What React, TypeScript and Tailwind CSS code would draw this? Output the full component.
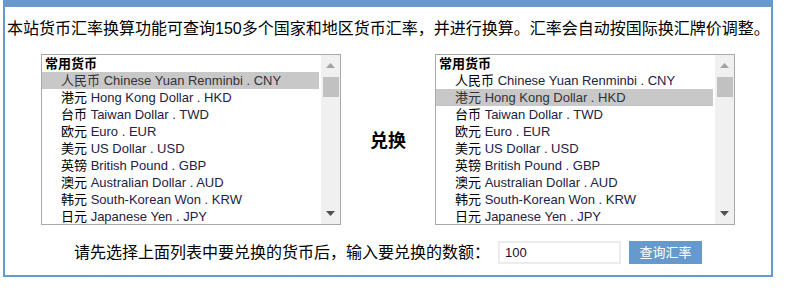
const currencies = [
  { cn: "人民币", en: "Chinese Yuan Renminbi . CNY" },
  { cn: "港元", en: "Hong Kong Dollar . HKD" },
  { cn: "台币", en: "Taiwan Dollar . TWD" },
  { cn: "欧元", en: "Euro . EUR" },
  { cn: "美元", en: "US Dollar . USD" },
  { cn: "英镑", en: "British Pound . GBP" },
  { cn: "澳元", en: "Australian Dollar . AUD" },
  { cn: "韩元", en: "South-Korean Won . KRW" },
  { cn: "日元", en: "Japanese Yen . JPY" },
];

type currencyListProps = {
  selected: number;
};

const CurrencyList = ({ selected }: currencyListProps) => {
  return (
    <div className="w-[300px] h-[171px] border border-[#a9a9a9] flex overflow-hidden bg-white">
      {/* options */}
      <div className="flex-1 pr-[2px] overflow-hidden">
        <div className="h-[17px] leading-[17px] pl-[3px] font-bold text-black text-[13px]">常用货币</div>
        {currencies.map((c, i) => (
          <div
            key={c.en}
            className={
              i === selected
                ? "h-[17px] leading-[17px] pl-[19px] text-[13px] whitespace-nowrap bg-[#c8c8c8] text-[#333333]"
                : "h-[17px] leading-[17px] pl-[19px] text-[13px] whitespace-nowrap text-black"
            }
          >
            {c.cn}{" "}
            <span className={i === selected ? "text-[#333333]" : "text-[#222244]"}>{c.en}</span>
          </div>
        ))}
      </div>
      {/* scrollbar */}
      <div className="w-[19px] h-full bg-[#f0f0f0] flex flex-col items-center">
        <div className="h-[17px] w-full flex items-center justify-center pt-[4px]">
          <svg width="9" height="5" viewBox="0 0 9 5">
            <path d="M4.5 0 L9 5 L0 5 Z" fill="#a3a3a3" />
          </svg>
        </div>
        <div className="mt-[5px] w-[16px] h-[20px] bg-[#c1c1c1]" />
        <div className="flex-1" />
        <div className="h-[17px] w-full flex items-center justify-center pb-[4px]">
          <svg width="9" height="5" viewBox="0 0 9 5">
            <path d="M0 0 L9 0 L4.5 5 Z" fill="#505050" />
          </svg>
        </div>
      </div>
    </div>
  );
};

const App = () => {
  return (
    <div
      className="w-[793px] h-[297px] bg-white"
      style={{ fontFamily: '"Liberation Sans", "Noto Sans CJK SC", sans-serif' }}
    >
      <div className="ml-[3px] w-[770px] h-[277px] border-2 border-t-[7px] border-[#6699cc]">
        <p className="pt-[10px] pl-[2px] leading-[24px] text-[16px] text-black whitespace-nowrap">
          本站货币汇率换算功能可查询150多个国家和地区货币汇率，并进行换算。汇率会自动按国际换汇牌价调整。
        </p>

        <div className="mt-[13px] pl-[36px] flex items-center">
          <CurrencyList selected={0} />
          <div className="w-[94px] text-center text-[18px] font-bold text-black" style={{ fontFamily: '"Noto Sans CJK SC", serif' }}>
            兑换
          </div>
          <CurrencyList selected={1} />
        </div>

        <div className="mt-[16px] pl-[69px] flex items-center h-[23px]">
          <span className="text-[16px] text-black whitespace-nowrap w-[424px]">
            请先选择上面列表中要兑换的货币后，输入要兑换的数额：
          </span>
          <input
            className="w-[123px] h-[23px] border-2 border-[#ececec] px-[5px] text-[13px] text-[#111133] outline-none"
            defaultValue="100"
          />
          <button className="ml-[8px] w-[73px] h-[23px] bg-[#6699cc] text-white text-[13px] leading-[23px]">
            查询汇率
          </button>
        </div>
      </div>
    </div>
  );
};

export default App;
